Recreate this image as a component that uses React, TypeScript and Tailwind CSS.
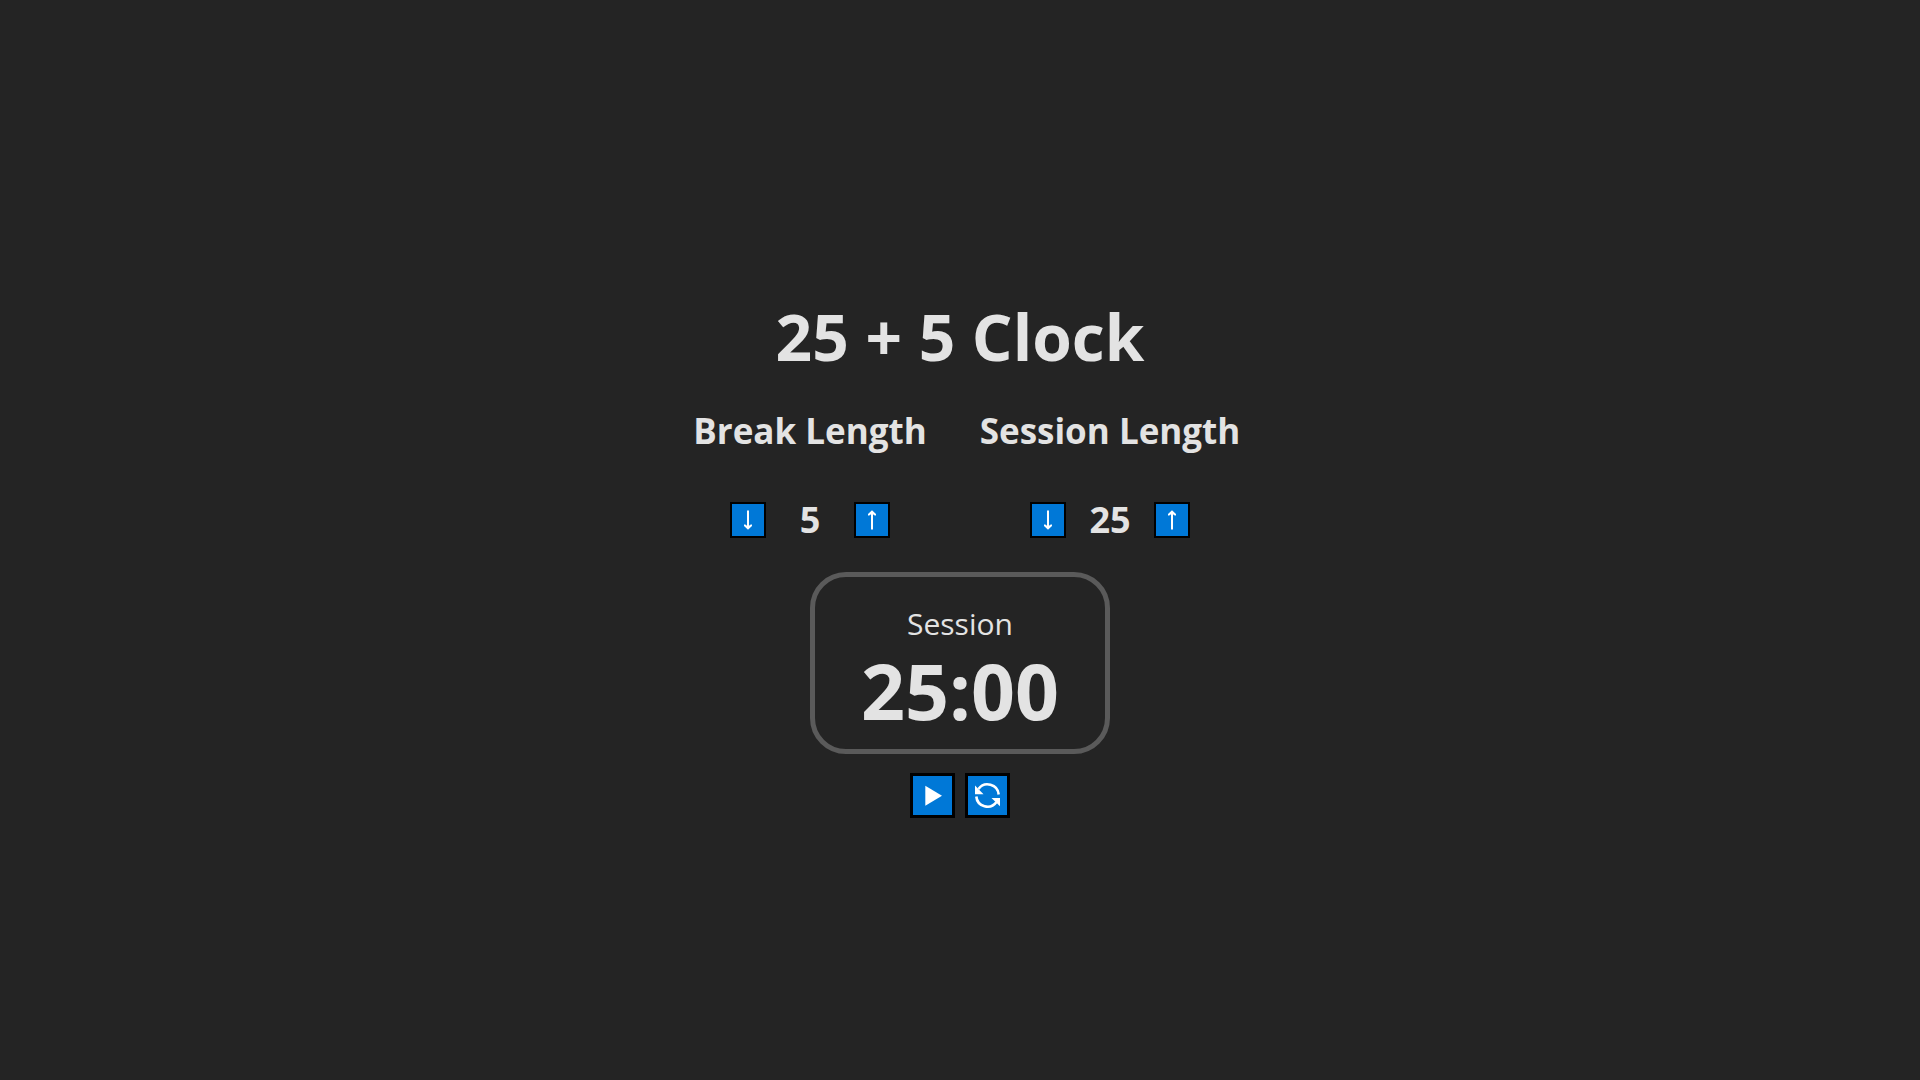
import { useState } from "react";

type LengthProps = {
  title: string;
  value: number;
  onChange: (value: number) => void;
};

function DownArrow() {
  return (
    <svg width="10" height="20" viewBox="0 0 10 20" fill="none" stroke="white" aria-hidden="true">
      <path d="M5 0.5V18" strokeWidth="2" />
      <path d="M1 14.5L2.3 14.6L5 16.6L7.7 14.6L9 14.5L9 16L5 19.8L1 16Z" fill="white" stroke="none" />
    </svg>
  );
}

function UpArrow() {
  return (
    <svg width="10" height="20" viewBox="0 0 10 20" fill="none" stroke="white" aria-hidden="true">
      <path d="M5 2V19.5" strokeWidth="2" />
      <path d="M1 5.5L2.3 5.4L5 3.4L7.7 5.4L9 5.5L9 4L5 0.2L1 4Z" fill="white" stroke="none" />
    </svg>
  );
}

function LengthControl({ title, value, onChange }: LengthProps) {
  const button =
    "flex size-9 cursor-pointer items-center justify-center border-2 border-black bg-[#0078d7]";
  return (
    <section className="flex w-[300px] flex-col items-center gap-[46px]">
      <h2 className="text-[35px] leading-[50px] font-bold whitespace-nowrap">{title}</h2>
      <div className="flex items-center">
        <button className={button} aria-label={`Decrease ${title}`} onClick={() => onChange(Math.max(1, value - 1))}>
          <DownArrow />
        </button>
        <span className="w-[88px] text-center text-[36px] leading-9 font-bold">{value}</span>
        <button className={button} aria-label={`Increase ${title}`} onClick={() => onChange(Math.min(60, value + 1))}>
          <UpArrow />
        </button>
      </div>
    </section>
  );
}

export default function App() {
  const [breakLength, setBreakLength] = useState(5);
  const [sessionLength, setSessionLength] = useState(25);
  const action =
    "flex size-[45px] cursor-pointer items-center justify-center border-[3px] border-black bg-[#0078d7]";

  return (
    <main className="flex min-h-screen flex-col items-center justify-center bg-[#242424] pt-[33px] font-['Open_Sans','Noto_Sans',sans-serif] text-[#e3e3e3]">
      <h1 className="text-[64px] leading-[84px] font-bold">25 + 5 Clock</h1>
      <div className="mt-[27px] flex">
        <LengthControl title="Break Length" value={breakLength} onChange={setBreakLength} />
        <LengthControl title="Session Length" value={sessionLength} onChange={setSessionLength} />
      </div>
      <section className="mt-[34px] flex w-[300px] flex-col items-center rounded-[36px] border-[5px] border-[#5a5a5a] pt-[23px] pb-[15px]">
        <div className="text-[30px] leading-[48px]">Session</div>
        <div className="text-[77px] leading-[86px] font-bold">{sessionLength}:00</div>
      </section>
      <div className="mt-[19px] flex gap-[10px]">
        <button className={action} aria-label="Start">
          <svg width="39" height="39" viewBox="0 0 39 39" fill="white" aria-hidden="true">
            <path d="M12.3 9.8L29 19.8L12.3 29.8Z" />
          </svg>
        </button>
        <button className={action} aria-label="Reset">
          <svg width="39" height="39" viewBox="0 0 39 39" fill="none" stroke="white" strokeWidth="2.6" aria-hidden="true">
            <path d="M10.5 13A11.2 11.2 0 0 1 30.7 18.5" />
            <path d="M8.3 20.5A11.2 11.2 0 0 0 28.5 26" />
            <path d="M7 9.5V18.3H15.5Z" fill="white" stroke="none" />
            <path d="M32 30.3V22H23.5Z" fill="white" stroke="none" />
          </svg>
        </button>
      </div>
    </main>
  );
}
